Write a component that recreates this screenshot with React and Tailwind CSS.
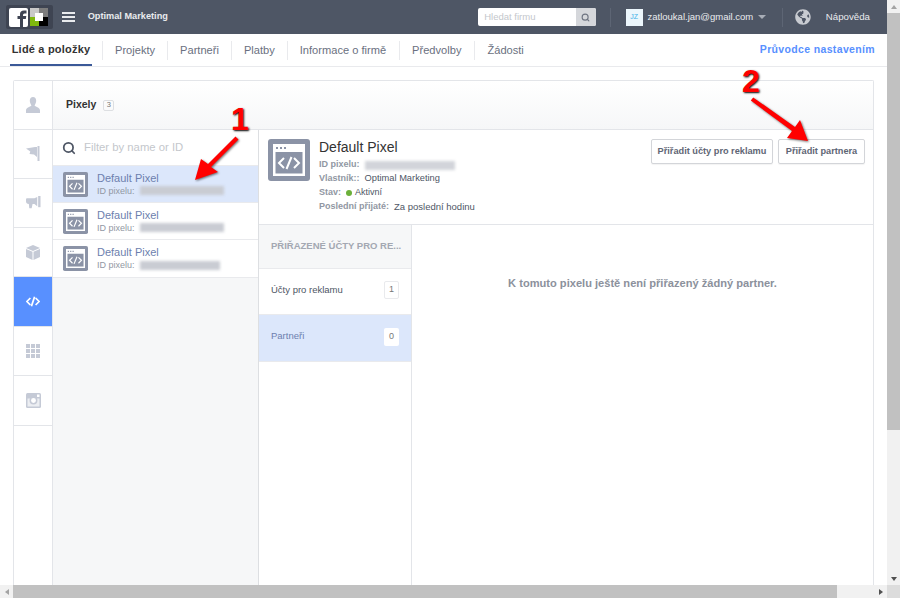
import React from "react";
import { Search } from "lucide-react";
import { FaGlobeAmericas } from "react-icons/fa";

const font = "font-['Liberation_Sans',Arial,sans-serif]";

function PixelIcon({ big }) {
  return (
    <svg viewBox="0 0 42 42" className={big ? "w-[42px] h-[42px] shrink-0" : "w-[25px] h-[25px] shrink-0"}>
      <rect width="42" height="42" rx="3" fill="#8b93a6" />
      <rect x="5" y="5" width="32" height="32" fill="#fff" />
      <rect x="7.5" y="13" width="27" height="21.5" fill="#8b93a6" />
      <rect x="8" y="8" width="2" height="2" fill="#8b93a6" />
      <rect x="12" y="8" width="2" height="2" fill="#8b93a6" />
      <rect x="16" y="8" width="2" height="2" fill="#8b93a6" />
      <path d="M16 19l-5 5 5 5M26 19l5 5-5 5M23.5 18l-5 12" fill="none" stroke="#fff" strokeWidth="2" />
    </svg>
  );
}

function RailIcon({ name }) {
  const c = "#c5cad6";
  if (name === "person")
    return (
      <svg viewBox="0 0 14 16" className="w-[14px] h-[16px]">
        <path d="M7 0c2 0 3.2 1.5 3.2 3.8S9 7.5 8.6 8.6c.4 1.2 5.4 2 5.4 4.8V16H0v-2.600c0-2.800 5-3.600 5.400-4.800C5 7.500 3.800 6 3.800 3.800S5 0 7 0z" fill={c} />
      </svg>
    );
  if (name === "flag")
    return (
      <svg viewBox="0 0 14 16" className="w-[14px] h-[16px]">
        <path d="M0 2.5l9-1.500L11 1v10L8 8.500 3.500 8l.8-2.500z" fill={c} />
        <rect x="11.5" y="0" width="2" height="15" fill={c} />
      </svg>
    );
  if (name === "megaphone")
    return (
      <svg viewBox="0 0 16 15" className="w-[15px] h-[14px]">
        <path d="M0 3.5Q0 2.500 1 2.500H9L12 1V11L9 8.500H7L6 13H3.500L3 8.500Q0 8.500 0 6z" fill={c} />
        <rect x="13" y="0" width="2.5" height="12" fill={c} />
      </svg>
    );
  if (name === "box")
    return (
      <svg viewBox="0 0 14 15" className="w-[14px] h-[15px]">
        <path d="M7 0l7 3-7 3-7-3z" fill={c} />
        <path d="M0 4l6.500 2.800V15L0 12zM14 4L7.500 6.800V15L14 12z" fill={c} />
      </svg>
    );
  if (name === "code")
    return (
      <svg viewBox="0 0 16 12" className="w-[14px] h-[11px]">
        <path d="M5 2L1 6l4 4M11 2l4 4-4 4M9.800 0.500L6.200 11.500" fill="none" stroke="#fff" strokeWidth="2" />
      </svg>
    );
  if (name === "grid")
    return (
      <div className="grid grid-cols-3 gap-px w-[14px] h-[14px]">
        {Array.from({ length: 9 }).map((_, i) => (
          <div key={i} className="bg-[#c5cad6]" />
        ))}
      </div>
    );
  return (
    <svg viewBox="0 0 15 15" className="w-[15px] h-[15px]">
      <rect width="15" height="15" rx="1.5" fill={c} />
      <rect x="1.5" y="5.5" width="12" height="8" fill="#eceef2" />
      <circle cx="7.5" cy="7.5" r="3.2" fill="#fff" stroke={c} strokeWidth="1.5" />
      <rect x="11" y="1.5" width="2.5" height="2.5" fill="#fff" />
    </svg>
  );
}

const rail = [
  ["person", "h-[49px]"],
  ["flag", "h-[49px]"],
  ["megaphone", "h-[49px]"],
  ["box", "h-[49px]"],
  ["code", "h-[50px]"],
  ["grid", "h-[49px]"],
  ["insta", "h-[50px]"],
];

const tabs = ["Projekty", "Partneři", "Platby", "Informace o firmě", "Předvolby", "Žádosti"];

function PixelRow({ selected, blur, tall }) {
  return (
    <div className={`${tall ? "h-[38px]" : "h-[37px]"} flex items-center gap-[9px] pl-[10px] border-b border-[#e9eaed] ${selected ? "bg-[#dce7fb]" : "bg-white"}`}>
      <PixelIcon />
      <div className="leading-none">
        <div className="text-[11px] text-[#6d7fae] leading-[13px]">Default Pixel</div>
        <div className="flex items-center text-[9px] text-[#9197a3] leading-[12px] gap-[5px]">
          ID pixelu:
          <span className={`h-[9px] ${blur} bg-[#c9ccd3] blur-[1.5px]`} />
        </div>
      </div>
    </div>
  );
}

function InfoRow({ label, children }) {
  return (
    <div className="flex items-center gap-[5px] h-[14px] text-[9px]">
      <span className="font-bold text-[#9197a3]">{label}</span>
      {children}
    </div>
  );
}

function Scrollbars({ vertical }) {
  if (vertical) {
    return (
      <div className="w-[13px] bg-[#f1f1f1] flex flex-col items-center">
        <div className="h-[13px] flex items-center justify-center">
          <div className="w-0 h-0 border-x-[3px] border-x-transparent border-b-[4px] border-b-[#a3a3a3]" />
        </div>
        <div className="w-full h-[417px] bg-[#c1c1c1]" />
        <div className="flex-1" />
        <div className="h-[13px] flex items-center justify-center">
          <div className="w-0 h-0 border-x-[3px] border-x-transparent border-t-[4px] border-t-[#505050]" />
        </div>
      </div>
    );
  }
  return (
    <div className="h-[13px] bg-[#f1f1f1] flex items-center shrink-0">
      <div className="w-[13px] flex items-center justify-center">
        <div className="w-0 h-0 border-y-[3px] border-y-transparent border-r-[4px] border-r-[#a3a3a3]" />
      </div>
      <div className="w-[824px] h-full bg-[#c1c1c1]" />
      <div className="w-[37px]" />
      <div className="w-[13px] flex items-center justify-center">
        <div className="w-0 h-0 border-y-[3px] border-y-transparent border-l-[4px] border-l-[#505050]" />
      </div>
      <div className="w-[13px] h-full bg-[#dcdcdc]" />
    </div>
  );
}

export default function App() {
  return (
    <div className={`${font} relative w-[900px] h-[598px] overflow-hidden flex flex-col bg-white text-[#333]`}>
      <div className="flex flex-1 min-h-0">
        <div className="w-[887px] flex flex-col">
          {/* top bar */}
          <div className="h-[34px] shrink-0 bg-[#4e5665] flex items-center pl-[6px] pr-[17px] text-white">
            <div className="w-[47px] h-[24px] bg-[#3e4452] rounded-[2px] flex items-center gap-[2px] px-[3px]">
              <svg viewBox="0 0 19 19" className="w-[19px] h-[19px] shrink-0">
                <rect width="19" height="19" rx="2" fill="#fff" />
                <path d="M11 19V11H8.500V8H11V6Q11 2.500 15 2.500H17.500V5.500H15.500Q14 5.500 14 7V8H17.300L16.800 11H14V19z" fill="#3e4452" />
              </svg>
              <div className="w-[18px] h-[18px] grid grid-cols-2 grid-rows-2 relative">
                <div className="bg-[#c9c9c9]" />
                <div className="bg-[#7d7d7d]" />
                <div className="bg-[#7fb80e]" />
                <div className="bg-black" />
                <div className="absolute left-[5px] top-[5px] w-[8px] h-[8px] bg-white" />
              </div>
            </div>
            <div className="ml-[9px] w-[13px] flex flex-col gap-[2.5px]">
              <div className="h-[1.5px] bg-[#e9ebee]" />
              <div className="h-[1.5px] bg-[#e9ebee]" />
              <div className="h-[1.5px] bg-[#e9ebee]" />
            </div>
            <div className="ml-[13px] w-[81px] text-[9.2px] font-bold text-[#e9ebee] whitespace-nowrap">Optimal Marketing</div>
            <div className="ml-[310px] w-[118px] h-[18px] rounded-[2px] bg-white flex overflow-hidden">
              <div className="flex-1 pl-[6px] text-[9.5px] leading-[18px] text-[#c4c7cc]">Hledat firmu</div>
              <div className="w-[20px] bg-[#d5d7db] flex items-center justify-center">
                <Search size={9} strokeWidth={3} color="#6f7582" />
              </div>
            </div>
            <div className="ml-[14px] w-px h-[19px] bg-[#5d6574]" />
            <div className="ml-[15px] w-[17px] h-[17px] bg-[#ecf6fc] flex items-center justify-center text-[7px] text-[#3eb1e8]">JZ</div>
            <div className="ml-[5px] w-[107px] text-[9.5px] text-[#e9ebee] whitespace-nowrap">zatloukal.jan@gmail.com</div>
            <div className="ml-[4px] w-0 h-0 border-x-[4px] border-x-transparent border-t-[4px] border-t-[#a8adb7]" />
            <div className="ml-[16px] w-px h-[19px] bg-[#5d6574]" />
            <FaGlobeAmericas size={16} color="#c8cbd1" className="ml-[12px]" />
            <div className="ml-[15px] text-[9.7px] text-[#e9ebee]">Nápověda</div>
          </div>

          {/* tabs */}
          <div className="h-[33px] shrink-0 border-b border-[#e9eaed] flex pl-[10px] pr-[12px]">
            <div className="w-[82px] h-[32px] border-b-2 border-[#3b5998] flex items-center justify-center text-[11px] font-bold tracking-[0.2px] text-[#333]">
              Lidé a položky
            </div>
            {tabs.map((t, i) => (
              <div key={t} className={`flex items-center h-[32px] ${i === 0 ? "ml-[10px]" : i > 3 ? "ml-[13px]" : "ml-[12px]"}`}>
                <div className="w-px h-[19px] bg-[#e9eaed] mr-[12px]" />
                <span className="text-[11.1px] text-[#6a7080]">{t}</span>
              </div>
            ))}
            <div className="ml-auto h-[32px] flex items-center text-[10.5px] font-bold tracking-[0.35px] text-[#5890ff]">
              Průvodce nastavením
            </div>
          </div>

          {/* panel */}
          <div className="flex-1 min-h-0 pt-[13px] pl-[13px] pr-[13px]">
            <div className="h-full border border-b-0 border-[#e3e5e9] rounded-t-[2px] flex">
              <div className="w-[39px] shrink-0 border-r border-[#e3e5e9] bg-white">
                {rail.map(([name, h]) => (
                  <div key={name} className={`${h} border-b border-[#e3e5e9] flex items-center justify-center ${name === "code" ? "bg-[#5890ff]" : ""}`}>
                    <RailIcon name={name} />
                  </div>
                ))}
              </div>

              <div className="flex-1 min-w-0 flex flex-col">
                <div className="h-[49px] shrink-0 border-b border-[#e3e5e9] bg-gradient-to-b from-white to-[#f6f7f8] flex items-center pl-[13px] gap-[7px]">
                  <span className="text-[10.5px] font-bold text-[#333]">Pixely</span>
                  <span className="w-[11px] h-[11px] border border-[#dddfe2] rounded-[2px] text-[7.5px] text-[#777] flex items-center justify-center">3</span>
                </div>

                <div className="flex-1 min-h-0 flex">
                  {/* list of pixels */}
                  <div className="w-[206px] shrink-0 border-r border-[#dddfe2] bg-[#f6f7f8]">
                    <div className="h-[36px] bg-white border-b border-[#e9eaed] flex items-center pl-[9px] gap-[8px]">
                      <Search size={14} strokeWidth={3} color="#4e5665" />
                      <span className="text-[11.3px] text-[#c4c7cc]">Filter by name or ID</span>
                    </div>
                    <PixelRow selected blur="w-[84px]" />
                    <PixelRow blur="w-[84px]" />
                    <PixelRow blur="w-[80px]" tall />
                  </div>

                  {/* detail */}
                  <div className="flex-1 min-w-0 flex flex-col">
                    <div className="h-[95px] shrink-0 border-b border-[#e3e5e9] flex pt-[9px] pl-[9px] pr-[8px]">
                      <PixelIcon big />
                      <div className="ml-[9px]">
                        <div className="mt-px mb-[3px] text-[14px] leading-[15px] text-[#333]">Default Pixel</div>
                        <InfoRow label="ID pixelu:">
                          <span className="h-[9px] w-[90px] bg-[#d2d4da] blur-[1.5px]" />
                        </InfoRow>
                        <InfoRow label="Vlastník::">
                          <span className="text-[9.3px] text-[#4e5665]">Optimal Marketing</span>
                        </InfoRow>
                        <InfoRow label="Stav:">
                          <span className="flex items-center gap-[3px] text-[#4e5665]">
                            <span className="w-[6px] h-[6px] rounded-full bg-[#6bb03a]" />
                            Aktivní
                          </span>
                        </InfoRow>
                        <InfoRow label="Poslední přijaté:">
                          <span className="text-[9.5px] text-[#4e5665]">Za poslední hodinu</span>
                        </InfoRow>
                      </div>
                      <div className="ml-auto flex gap-[5px]">
                        <button className="h-[25px] w-[122px] border border-[#d3d5d9] rounded-[2px] bg-white shadow-[0_1px_1px_rgba(0,0,0,.05)] text-[9.2px] font-bold text-[#5f6675]">Přiřadit účty pro reklamu</button>
                        <button className="h-[25px] w-[87px] border border-[#d3d5d9] rounded-[2px] bg-white shadow-[0_1px_1px_rgba(0,0,0,.05)] text-[9.2px] font-bold text-[#5f6675]">Přiřadit partnera</button>
                      </div>
                    </div>

                    <div className="flex-1 min-h-0 flex">
                      <div className="w-[153px] shrink-0 border-r border-[#e3e5e9]">
                        <div className="h-[44px] bg-[#f6f7f8] border-b border-[#e9eaed] flex items-center pl-[12px] text-[9.5px] font-bold text-[#a3a8b2] whitespace-nowrap">
                          PŘIŘAZENÉ ÚČTY PRO RE...
                        </div>
                        <div className="h-[46px] border-b border-[#e9eaed] flex items-center justify-between pl-[12px] pr-[12px] pb-[3px] text-[9.5px] text-[#4e5665]">
                          Účty pro reklamu
                          <span className="w-[15px] h-[18px] border border-[#e9eaed] rounded-[2px] bg-white flex items-center justify-center text-[9px] text-[#777]">1</span>
                        </div>
                        <div className="h-[47px] bg-[#dce7fb] border-b border-[#e9eaed] flex items-center justify-between pl-[12px] pr-[12px] pb-[3px] text-[9.5px] text-[#6d7fae]">
                          Partneři
                          <span className="w-[15px] h-[18px] rounded-[2px] bg-white flex items-center justify-center text-[9px] text-[#777]">0</span>
                        </div>
                      </div>
                      <div className="flex-1 flex justify-center pt-[50px] text-[11.1px] font-bold text-[#8c919c]">
                        K tomuto pixelu ještě není přiřazený žádný partner.
                      </div>
                    </div>
                  </div>
                </div>
              </div>
            </div>
          </div>
        </div>
        <Scrollbars vertical />
      </div>
      <Scrollbars />

      {/* annotations */}
      <span className="absolute left-[231px] top-[100px] text-[32px] leading-[38px] font-bold text-[#f00] [text-shadow:1px_1px_2px_#000]">1</span>
      <span className="absolute left-[742px] top-[62px] text-[32px] leading-[38px] font-bold text-[#f00] [text-shadow:1px_1px_2px_#000]">2</span>
      <svg className="absolute left-0 top-0 w-[900px] h-[598px] pointer-events-none" viewBox="0 0 900 598">
        <g fill="#f00" style={{ filter: "drop-shadow(1px 1px 1px rgba(0,0,0,.55))" }}>
          <path d="M235.500 136.500L238.500 139.500L211 167L218 172L195 180L201 159L208 164z" />
          <path d="M753.200 97.400L750.800 100.600L792 131L787 138L808 141L800 120L795 127z" />
        </g>
      </svg>
    </div>
  );
}
